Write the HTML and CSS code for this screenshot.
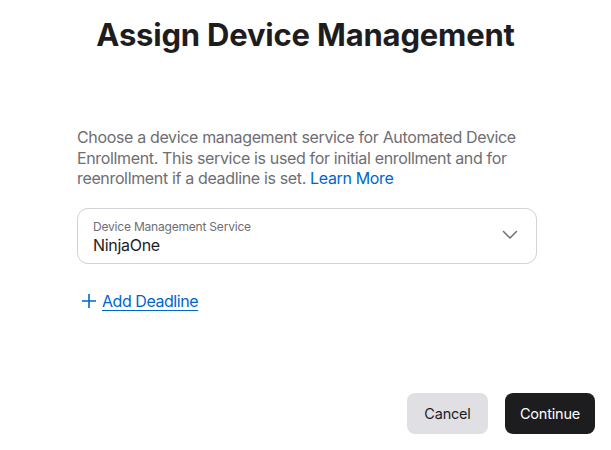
FILE: index.html
```html
<!DOCTYPE html>
<html lang="en">
<head>
  <meta charset="UTF-8">
  <meta name="viewport" content="width=device-width, initial-scale=1.0">
  <title>Assign Device Management</title>
  <link rel="stylesheet" href="styles.css">
</head>
<body>
  <div class="sheet">
    <h1>Assign Device Management</h1>

    <div class="content">
      <p class="intro">Choose a device management service for Automated Device Enrollment. This service is used for initial enrollment and for reenrollment if a deadline is set. <a href="#" class="link">Learn More</a></p>

      <div class="select">
        <div class="select-text">
          <span class="select-label">Device Management Service</span>
          <span class="select-value">NinjaOne</span>
        </div>
        <svg class="chevron" width="16" height="10" viewBox="0 0 16 10">
          <path d="M1.5 1.5 L8 8 L14.5 1.5" fill="none" stroke="#6e6e73" stroke-width="1.5" stroke-linecap="round" stroke-linejoin="round"/>
        </svg>
      </div>

      <div class="add-row">
        <svg class="plus" width="14" height="14" viewBox="0 0 14 14">
          <path d="M7 0.5 V13.5 M0.5 7 H13.5" stroke="#0066cc" stroke-width="1.6" stroke-linecap="round"/>
        </svg>
        <a href="#" class="add-link">Add Deadline</a>
      </div>
    </div>

    <div class="actions">
      <button class="btn btn-cancel">Cancel</button>
      <button class="btn btn-continue">Continue</button>
    </div>
  </div>
</body>
</html>
```

FILE: styles.css
```css
body {
  margin: 0;
  font-family: Inter, "Noto Sans", sans-serif;
  background: #ffffff;
  color: #1d1d1f;
}
.sheet {
  width: 611px;
  height: 450px;
  display: flex;
  flex-direction: column;
}
h1 {
  margin: 17px 0 0;
  font-size: 31px;
  font-weight: 700;
  letter-spacing: -0.2px;
  text-align: center;
  line-height: 36px;
}
.content {
  width: 460px;
  margin: 74px 0 0 77px;
}
.intro {
  margin: 0;
  font-size: 16px;
  line-height: 20.5px;
  letter-spacing: -0.35px;
  color: #6e6e73;
}
.link {
  color: #0066cc;
  text-decoration: none;
}
.select {
  margin-top: 19px;
  height: 56px;
  box-sizing: border-box;
  border: 1px solid #d2d2d7;
  border-radius: 11px;
  padding: 2px 18px 0 15px;
  display: flex;
  align-items: center;
  justify-content: space-between;
}
.select-text {
  display: flex;
  flex-direction: column;
}
.select-label {
  font-size: 12px;
  line-height: 16px;
  letter-spacing: -0.2px;
  color: #6e6e73;
}
.select-value {
  font-size: 16px;
  line-height: 20px;
  letter-spacing: -0.3px;
  color: #1d1d1f;
}
.chevron {
  margin-bottom: 4px;
}
.add-row {
  margin-top: 27px;
  margin-left: 5px;
  display: flex;
  align-items: center;
  gap: 6px;
}
.add-link {
  font-size: 16px;
  letter-spacing: -0.45px;
  color: #0066cc;
  text-decoration: underline;
  text-underline-offset: 3px;
}
.actions {
  margin-top: auto;
  margin-bottom: 16px;
  display: flex;
  justify-content: flex-end;
  gap: 17px;
  padding-right: 16px;
}
.btn {
  height: 41px;
  border: none;
  border-radius: 8px;
  font-family: Inter, "Noto Sans", sans-serif;
  font-size: 14.5px;
  letter-spacing: -0.2px;
  cursor: pointer;
}
.btn-cancel {
  width: 81px;
  background: #e0e0e4;
  color: #1d1d1f;
}
.btn-continue {
  width: 90px;
  background: #1d1d1f;
  color: #ffffff;
}
```
